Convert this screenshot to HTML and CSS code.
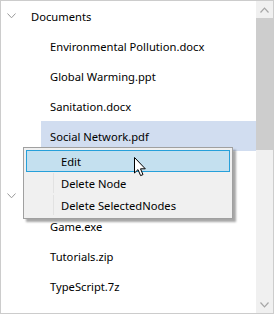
FILE: index.html
```html
<!DOCTYPE html>
<html lang="en">
<head>
  <meta charset="utf-8">
  <title>TreeView context menu</title>
  <link rel="stylesheet" href="styles.css">
</head>
<body>
  <div class="tree">
    <ul class="tree-list">
      <li class="node node-parent">
        <svg class="chevron" width="9" height="6" viewBox="0 0 9 6"><path d="M0.5 0.5 L4.5 4.8 L8.5 0.5" fill="none" stroke="#9a9a9a" stroke-width="1"/></svg>
        <span class="node-title">Documents</span>
      </li>
      <li class="node node-child"><span class="node-title">Environmental Pollution.docx</span></li>
      <li class="node node-child"><span class="node-title">Global Warming.ppt</span></li>
      <li class="node node-child"><span class="node-title">Sanitation.docx</span></li>
      <li class="node node-child node-selected"><span class="node-title">Social Network.pdf</span></li>
      <li class="node node-child"><span class="node-title">Youth Empowerment.pdf</span></li>
      <li class="node node-parent">
        <svg class="chevron" width="9" height="6" viewBox="0 0 9 6"><path d="M0.5 0.5 L4.5 4.8 L8.5 0.5" fill="none" stroke="#9a9a9a" stroke-width="1"/></svg>
        <span class="node-title">Downloads</span>
      </li>
      <li class="node node-child"><span class="node-title">Game.exe</span></li>
      <li class="node node-child"><span class="node-title">Tutorials.zip</span></li>
      <li class="node node-child"><span class="node-title">TypeScript.7z</span></li>
      <li class="node node-child"><span class="node-title">UI-Guide.pdf</span></li>
    </ul>

    <div class="scrollbar">
      <div class="scroll-button">
        <svg width="9" height="6" viewBox="0 0 9 6"><path d="M0.5 5.5 L4.5 1.2 L8.5 5.5" fill="none" stroke="#a6a6a6" stroke-width="1.2"/></svg>
      </div>
      <div class="scroll-track">
        <div class="scroll-thumb"></div>
      </div>
      <div class="scroll-button">
        <svg width="9" height="6" viewBox="0 0 9 6"><path d="M0.5 0.5 L4.5 4.8 L8.5 0.5" fill="none" stroke="#a6a6a6" stroke-width="1.2"/></svg>
      </div>
    </div>

    <!-- контекстное меню поверх дерева -->
    <ul class="context-menu">
      <li class="menu-item menu-item-active"><span class="menu-icon"></span><span class="menu-title">Edit</span></li>
      <li class="menu-item"><span class="menu-icon"></span><span class="menu-title">Delete Node</span></li>
      <li class="menu-item"><span class="menu-icon"></span><span class="menu-title">Delete SelectedNodes</span></li>
    </ul>

    <svg class="cursor" width="13" height="20" viewBox="0 0 13 20">
      <path d="M0.5 0.5 L0.5 16 L4 12.6 L6.6 18.6 L9 17.6 L6.5 11.8 L11.3 11.8 Z" fill="#ffffff" stroke="#000000" stroke-width="1" stroke-linejoin="miter"/>
    </svg>
  </div>
</body>
</html>
```

FILE: styles.css
```css
*, *::before, *::after {
  margin: 0;
  padding: 0;
  box-sizing: border-box;
}

body {
  background-color: #ffffff;
  color: #000000;
  font-family: "Noto Sans", sans-serif;
  font-size: 11.2px;
}

.tree {
  position: relative;
  display: flex;
  width: 274px;
  height: 314px;
  border: 1px solid #cccccc;
  overflow: hidden;
}

.tree-list {
  flex: 1;
  list-style: none;
  overflow: hidden;
}

.node {
  display: flex;
  align-items: center;
  height: 30px;
  white-space: nowrap;
}

.node-parent {
  padding-left: 6px;
}

.chevron {
  flex: none;
  margin-right: 15px;
}

.node-child {
  margin-left: 40px;
  padding-left: 9px;
}

.node-selected {
  background-color: #d1ddf0;
}

.scrollbar {
  display: flex;
  flex-direction: column;
  width: 17px;
  background-color: #f0f0f0;
}

.scroll-button {
  display: flex;
  align-items: center;
  justify-content: center;
  height: 17px;
}

.scroll-track {
  flex: 1;
}

.scroll-thumb {
  height: 132px;
  background-color: #cdcdcd;
}

.context-menu {
  position: absolute;
  left: 22px;
  top: 146px;
  width: 210px;
  padding: 2px;
  list-style: none;
  border: 1px solid #a0a0a0;
  background-color: #f0f0f0;
  box-shadow: 3px 3px 2px rgba(0, 0, 0, 0.35);
}

.menu-item {
  display: flex;
  align-items: center;
  height: 22px;
  border: 1px solid transparent;
}

.menu-item-active {
  background-color: #c4e0ef;
  border-color: #26a0da;
}

.menu-icon {
  align-self: stretch;
  width: 27px;
  margin-right: 7px;
  border-right: 1px solid #e2e2e2;
}

.menu-item-active .menu-icon {
  border-right-color: transparent;
}

.cursor {
  position: absolute;
  left: 133px;
  top: 156px;
}
```
